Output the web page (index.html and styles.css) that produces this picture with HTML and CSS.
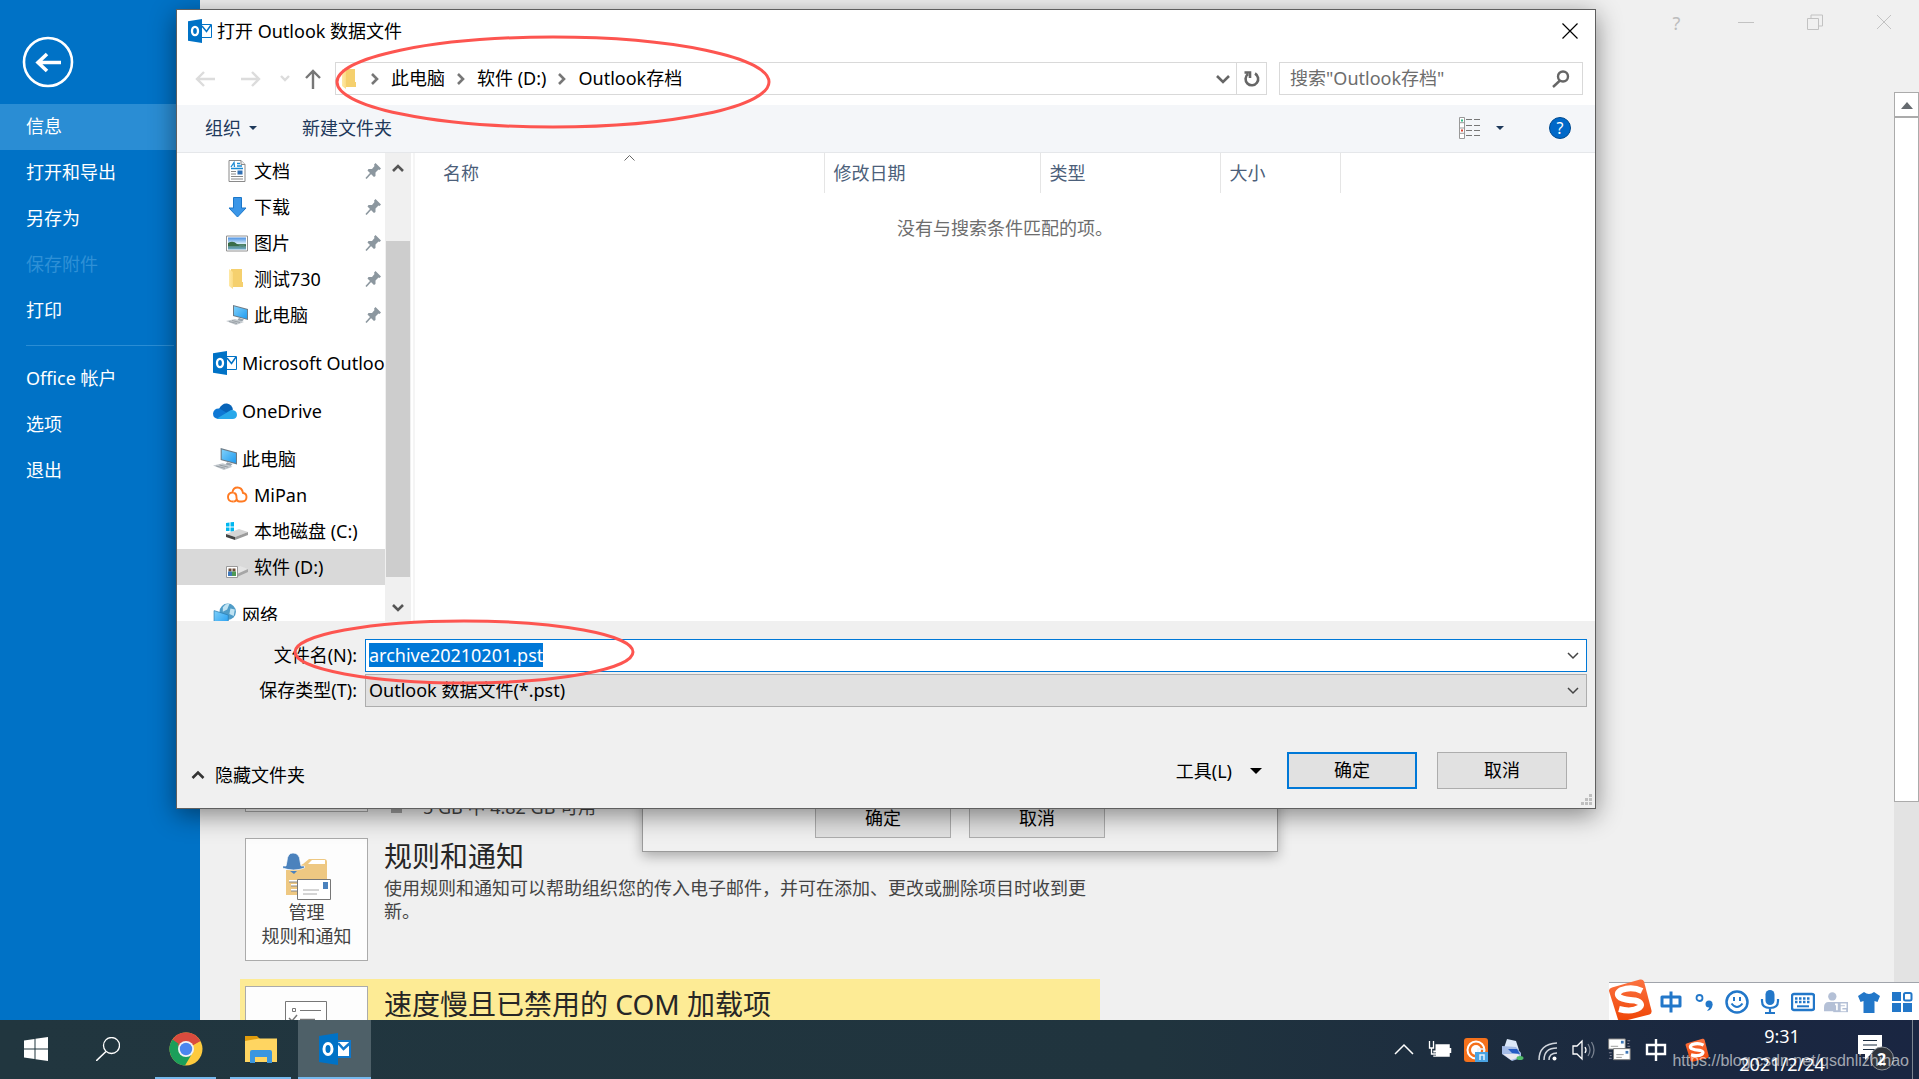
FILE: index.html
```html
<!DOCTYPE html>
<html lang="zh-CN">
<head>
<meta charset="utf-8">
<title>打开 Outlook 数据文件</title>
<link rel="stylesheet" href="styles.css">
</head>
<body>
<svg class="sprite" aria-hidden="true">
  <defs>
    <linearGradient id="g-folder" x1="0" x2="1"><stop offset="0" stop-color="#ffe9a6"/><stop offset="1" stop-color="#fbdc85"/></linearGradient>
    <linearGradient id="g-screen" x1="0" y1="0" x2="1" y2="1"><stop offset="0" stop-color="#7fd0fa"/><stop offset="1" stop-color="#1f9bf0"/></linearGradient>
    <linearGradient id="g-sogou" x1="0" y1="0" x2="0" y2="1"><stop offset="0" stop-color="#fb7240"/><stop offset="1" stop-color="#ef4506"/></linearGradient>
    <linearGradient id="g-sky" x1="0" y1="0" x2="0" y2="1"><stop offset="0" stop-color="#4a90e2"/><stop offset=".5" stop-color="#d5ebfa"/><stop offset=".55" stop-color="#4d7f5c"/><stop offset="1" stop-color="#6ea9cc"/></linearGradient>
  </defs>
  <symbol id="i-outlook" viewBox="0 0 24 24">
    <path d="M13 5.500h10.500v13H13z" fill="#fff" stroke="#0072c6"/><path d="M14 7l4.500 5.500L23 6" fill="none" stroke="#0072c6" stroke-width="1.500"/>
    <path d="M0 2.200L14 0v24L0 21.800z" fill="#0072c6"/><ellipse cx="7" cy="12" rx="3" ry="4.200" fill="none" stroke="#fff" stroke-width="2.300"/>
  </symbol>
  <symbol id="i-doc" viewBox="0 0 22 22">
    <path d="M3 .500h12l4 4v17H3z" fill="#fff" stroke="#8a8a8a"/><path d="M15 .500v4h4" fill="#eee" stroke="#8a8a8a"/>
    <path d="M5 7L8 2.500 8.500 7M11 3.500h3M11 6h5M5 8.500h12" stroke="#1b8ad3" fill="none" stroke-width="1.300"/><path d="M5 11.500h5M5 14h5M5 16.500h12M5 19h12" stroke="#888"/><path d="M11.500 10.500h5v4h-5z" fill="#2f6fb4"/>
  </symbol>
  <symbol id="i-down" viewBox="0 0 22 22"><path d="M7.500 1.500h8V12H20l-8.500 9L3 12h4.500z" fill="#3a96e8" stroke="#1b76c8"/></symbol>
  <symbol id="i-pic" viewBox="0 0 22 22"><path d="M.500 4h21v15H.500z" fill="#fff" stroke="#929292"/><path d="M2 5.500h18v12H2z" fill="url(#g-sky)"/><path d="M2 11q5-3 9 1t9 1v1H2z" fill="#3a6d48"/></symbol>
  <symbol id="i-folder" viewBox="0 0 22 22"><path d="M5 1h11v13h1v5H5z" fill="#f5d06e"/><path d="M3 1l4 3v17l-4-3z" fill="url(#g-folder)"/></symbol>
  <symbol id="i-pc" viewBox="0 0 22 22"><path d="M7 1l15 4v11L7 12z" fill="#6c7a85"/><path d="M8 2.200l13 3.500v9L8 11.200z" fill="url(#g-screen)"/><path d="M13 14l5 1.500-2 2-5-1z" fill="#9aa4ac"/><path d="M0 17l9-2 9 3-8 3z" fill="#c3c9ce"/><path d="M3 17.500l8 2M6 16.500l8 2" stroke="#8f979d" stroke-width=".8"/></symbol>
  <symbol id="i-onedrive" viewBox="0 0 24 24"><path d="M6 10Q9 4 14 4.500q5 1 6 6l-8 6z" fill="#0864b8"/><path d="M5 20Q0 19 0 14.500 1 9 6.500 9.500L14 14l-8 6z" fill="#0f78d4"/><path d="M4 19.500l14-8.500q6 0 6 5-.5 4-4.500 4H6z" fill="#28a8ea"/></symbol>
  <symbol id="i-mipan" viewBox="0 0 22 22"><path d="M7.500 17.500H7q-5 0-5-4.500 0-4 4.500-4.500Q7 3.500 11.500 3.500T17 9q3.500.500 3.500 4 0 4.500-4.500 4.500h-2.500q-3 0-3-4Q10.500 9 7.500 9" fill="none" stroke="#ff7a22" stroke-width="1.900"/><path d="M7.500 17.500q2.500 0 3-2" fill="none" stroke="#ff7a22" stroke-width="1.900"/></symbol>
  <symbol id="i-drivec" viewBox="0 0 22 22"><path d="M0 3l3.500-.500V6.500H0zM4.500 2.300L8 2v4.500H4.500zM0 7.500h3.500v3.500H0zM4.500 7.500H8V11.500H4.500z" fill="#00b7f0"/><path d="M0 14l13-5 9 3-13 5z" fill="#d5d5d5"/><path d="M0 14l9 3v3l-9-3z" fill="#444"/><path d="M9 17l13-5v3L9 20z" fill="#9b9b9b"/></symbol>
  <symbol id="i-drived" viewBox="0 0 22 22"><path d="M8 13l6-3 8 3-11 5z" fill="#e4e4e4"/><path d="M11 18l11-5v3l-11 5z" fill="#a6a6a6"/><path d="M.500 10.500h11v11h-11z" fill="#fff" stroke="#999"/><path d="M2.500 12.500h3v3h-3zM6.500 12.500h3v3h-3z" fill="#6b4a36"/><path d="M2 15.500h4V20H2z" fill="#3f78bb"/><path d="M6 15.500h4V20H6z" fill="#4f9a56"/></symbol>
  <symbol id="i-net" viewBox="0 0 22 22"><circle cx="13.500" cy="8" r="7.500" fill="#4f9cc7"/><path d="M9 4q3-4 6-3l-2 5-4 2zM16 5l4 1-1 6-4-2z" fill="#bfe3f3"/><path d="M1 7l13 4v10L1 18z" fill="url(#g-screen)" stroke="#2a7fb5" stroke-width=".7"/></symbol>
  <symbol id="i-pin" viewBox="0 0 16 16"><path d="M10.500 0L16 5.500 14.500 7 13.500 6.500 10.500 9.500 10.500 13 9 14 2.500 7.500 3.500 6H7L9.500 3 9 1.800z" fill="#8c979f"/><path d="M6 10L1 15.500" stroke="#8c979f" stroke-width="1.600"/></symbol>
  <symbol id="i-sogou" viewBox="0 0 44 44"><path d="M4 9.500L32 1.500q3-.6 4 2l7.500 29q.5 3-2 4L14 43.500q-3 .5-4-2L1 13q-.5-2.500 3-3.500z" fill="url(#g-sogou)"/><path d="M34 13Q24 8 13.500 12 7 15.500 12 19.500 17 22 27 22.500q9 2.500 4.500 7Q24 34.500 11 31" fill="none" stroke="#fff" stroke-width="6"/></symbol>
  <symbol id="i-mail" viewBox="0 0 26 26"><path d="M.700 1h18v11h-18z" fill="#fff" stroke="#777"/><path d="M14 3h3v3h-3z" fill="#3f78b8"/><path d="M3 9h8" stroke="#999"/><path d="M6 11.500h18v12H6z" fill="#fff" stroke="#777"/><path d="M19 14h3v3h-3z" fill="#3f78b8"/><path d="M9 18h8M9 21h6" stroke="#999"/><path d="M21 3h3M21 6h2M21 9h3M1 16h3M2 19h2M1 22h3" stroke="#889"/></symbol>
  <symbol id="i-zhong" viewBox="0 0 24 24"><path d="M3 7h18v9H3zM12 1v22" fill="none" stroke="currentColor" stroke-width="2.400"/></symbol>
</svg>

<main class="workspace">
  <nav class="backstage-nav" aria-label="文件">
    <button class="back" aria-label="返回"><svg viewBox="0 0 52 52"><circle cx="26" cy="26" r="24" fill="none" stroke="#fff" stroke-width="2.600"/><path d="M39 26.500H16M25 18l-9 8.500 9 8.500" fill="none" stroke="#fff" stroke-width="3.600"/></svg></button>
    <a href="#info" class="nav-item active">信息</a>
    <a href="#open" class="nav-item">打开和导出</a>
    <a href="#saveas" class="nav-item">另存为</a>
    <a href="#attach" class="nav-item disabled">保存附件</a>
    <a href="#print" class="nav-item">打印</a>
    <hr class="nav-rule">
    <a href="#account" class="nav-item">Office 帐户</a>
    <a href="#options" class="nav-item">选项</a>
    <a href="#exit" class="nav-item">退出</a>
  </nav>

  <div class="backstage-content">
    <section class="section mailbox">
      <div class="tile"></div>
      <div class="meter"><span class="meter-block"></span><span>5 GB 中 4.82 GB 可用</span></div>
    </section>
    <section class="section">
      <button class="tile">
        <svg class="tile-icon" viewBox="0 0 48 48"><path d="M3 18h5l12-6 6-5h15q3 0 3 3v33H3z" fill="#eec882"/><path d="M25 12l4-4h13v4z" fill="#fff"/><path d="M10 1q6.500 0 7 8l1 5h3.500v2q-11 4-22 0v-2H3l1-5q.500-8 6-8z" fill="#4b82bd" stroke="#fff" stroke-width=".7"/><path d="M7 19h7l-3 3z" fill="#4b82bd"/><path d="M6 28h9v2H6zM8 32h7v2H8zM8 37h7v2H8z" fill="#fff"/><path d="M6 30h8M8 34h6M8 39h6" stroke="#888"/><path d="M14.500 27.500h33v20h-33z" fill="#fff" stroke="#777"/><path d="M40 30h5v7h-5z" fill="#4b82bd"/><path d="M20 38h16M20 42h14" stroke="#aaa"/></svg>
        <span>管理<br>规则和通知</span>
      </button>
      <div class="section-text">
        <h2>规则和通知</h2>
        <p>使用规则和通知可以帮助组织您的传入电子邮件，并可在添加、更改或删除项目时收到更新。</p>
      </div>
    </section>
    <section class="section highlighted">
      <button class="tile" aria-label="管理 COM 加载项">
        <svg class="tile-icon" viewBox="0 0 48 48"><path d="M2.500 1.500h41v42h-41z" fill="#fff" stroke="#777"/><path d="M9.500 8.500h3v3h-3zM17 10.500h21" fill="none" stroke="#777"/><path d="M6 18l3 3 5-6M17 19.500h15" fill="none" stroke="#777" stroke-width="1.500"/></svg>
      </button>
      <div class="section-text"><h2>速度慢且已禁用的 COM 加载项</h2></div>
    </section>
  </div>

  <div class="window-controls">
    <button aria-label="帮助">?</button>
    <button aria-label="最小化"><svg viewBox="0 0 16 16"><path d="M0 8.500h16"/></svg></button>
    <button aria-label="还原"><svg viewBox="0 0 16 16"><path d="M.500 4.500h11v11H.500zM4 4V1h11.500v11H12"/></svg></button>
    <button aria-label="关闭"><svg viewBox="0 0 16 16"><path d="M1 1l14 14M15 1L1 15"/></svg></button>
  </div>

  <div class="page-scroll">
    <button class="scroll-up" aria-label="向上滚动"><svg viewBox="0 0 12 8"><path d="M0 8L6 1l6 7z" fill="#666b70"/></svg></button>
    <div class="scroll-thumb"></div>
  </div>

  <div class="settings-dialog">
    <button class="push">确定</button>
    <button class="push">取消</button>
  </div>

  <form class="file-dialog" role="dialog" aria-labelledby="dlg-title">
    <header class="titlebar">
      <svg class="ico24"><use href="#i-outlook"/></svg>
      <h1 id="dlg-title">打开 Outlook 数据文件</h1>
      <button type="button" class="close" aria-label="关闭"><svg viewBox="0 0 16 16"><path d="M.500.500l15 15M15.500.500l-15 15" stroke="#000" stroke-width="1.200"/></svg></button>
    </header>

    <div class="address-row">
      <div class="history">
        <button type="button" aria-label="后退"><svg viewBox="0 0 20 20"><path d="M20 10H2M9 3l-7 7 7 7" stroke="#dcdcdc"/></svg></button>
        <button type="button" class="forward" aria-label="前进"><svg viewBox="0 0 20 20"><path d="M0 10h18M11 3l7 7-7 7" stroke="#dcdcdc"/></svg></button>
        <button type="button" class="recent" aria-label="最近位置"><svg viewBox="0 0 10 20"><path d="M1 7l4 4 4-4" stroke="#dcdcdc"/></svg></button>
        <button type="button" class="up" aria-label="上一级"><svg viewBox="0 0 20 20"><path d="M10 20V2M3 9l7-7 7 7" stroke="#777"/></svg></button>
      </div>
      <div class="address">
        <svg class="ico22"><use href="#i-folder"/></svg>
        <svg class="crumb-sep" viewBox="0 0 8 12"><path d="M1 1l5 5-5 5"/></svg>
        <a href="#pc">此电脑</a>
        <svg class="crumb-sep" viewBox="0 0 8 12"><path d="M1 1l5 5-5 5"/></svg>
        <a href="#d">软件 (D:)</a>
        <svg class="crumb-sep" viewBox="0 0 8 12"><path d="M1 1l5 5-5 5"/></svg>
        <a href="#archive">Outlook存档</a>
        <button type="button" class="addr-drop" aria-label="历史记录"><svg viewBox="0 0 14 10"><path d="M1 2l6 6 6-6"/></svg></button>
        <button type="button" class="refresh" aria-label="刷新"><svg viewBox="0 0 18 18"><path d="M12 3.500a6.300 6.300 0 1 1-7 .5M1.500 2.500H7V8" fill="none" stroke="#666" stroke-width="2.600"/></svg></button>
      </div>
      <div class="search">
        <input type="search" aria-label="搜索" placeholder='搜索"Outlook存档"'>
        <svg viewBox="0 0 18 18"><circle cx="11" cy="6.500" r="5" /><path d="M8 10.500L1 17"/></svg>
      </div>
    </div>

    <div class="toolbar">
      <button type="button">组织<svg class="tri" viewBox="0 0 8 4"><path d="M0 0h8L4 4z"/></svg></button>
      <button type="button">新建文件夹</button>
      <button type="button" class="view" aria-label="更改视图"><svg class="ico22" viewBox="0 0 22 22"><path d="M.500.500h5v21h-5zM.500 5.700h5M.500 11h5M.500 16.300h5" fill="#fff" stroke="#999"/><path d="M7 2.500h6M15 2.500h6M7 8.500h6M15 8.500h6M7 13.500h6M15 13.500h6M7 18.500h6M15 18.500h6" stroke="#777"/><path d="M2 2.500h2v2H2z" fill="#3b8"/><path d="M2 12.500h2v2H2z" fill="#d43"/></svg><svg class="tri" viewBox="0 0 8 4"><path d="M0 0h8L4 4z"/></svg></button>
      <button type="button" class="help" aria-label="帮助">?</button>
    </div>

    <div class="panes">
      <ul class="tree">
        <li class="sub"><svg class="ico22"><use href="#i-doc"/></svg><span>文档</span><svg class="pin"><use href="#i-pin"/></svg></li>
        <li class="sub"><svg class="ico22"><use href="#i-down"/></svg><span>下载</span><svg class="pin"><use href="#i-pin"/></svg></li>
        <li class="sub"><svg class="ico22"><use href="#i-pic"/></svg><span>图片</span><svg class="pin"><use href="#i-pin"/></svg></li>
        <li class="sub"><svg class="ico22"><use href="#i-folder"/></svg><span>测试730</span><svg class="pin"><use href="#i-pin"/></svg></li>
        <li class="sub"><svg class="ico22"><use href="#i-pc"/></svg><span>此电脑</span><svg class="pin"><use href="#i-pin"/></svg></li>
        <li class="root"><svg class="ico24"><use href="#i-outlook"/></svg><span>Microsoft Outlook</span></li>
        <li class="root"><svg class="ico24"><use href="#i-onedrive"/></svg><span>OneDrive</span></li>
        <li class="root"><svg class="ico24"><use href="#i-pc"/></svg><span>此电脑</span></li>
        <li class="sub"><svg class="ico22"><use href="#i-mipan"/></svg><span>MiPan</span></li>
        <li class="sub"><svg class="ico22"><use href="#i-drivec"/></svg><span>本地磁盘 (C:)</span></li>
        <li class="sub selected"><svg class="ico22"><use href="#i-drived"/></svg><span>软件 (D:)</span></li>
        <li class="root"><svg class="ico24"><use href="#i-net"/></svg><span>网络</span></li>
      </ul>
      <div class="tree-scroll">
        <svg viewBox="0 0 12 10"><path d="M1 8l5-5 5 5"/></svg>
        <div class="tree-thumb"></div>
        <svg viewBox="0 0 12 10"><path d="M1 2l5 5 5-5"/></svg>
      </div>
      <div class="files">
        <table>
          <thead><tr><th class="c-name">名称<svg class="sort" viewBox="0 0 11 6"><path d="M.500 5.500l5-5 5 5" fill="none" stroke="#666"/></svg></th><th class="c-date">修改日期</th><th class="c-type">类型</th><th class="c-size">大小</th><th class="c-rest"></th></tr></thead>
          <tbody><tr><td colspan="5">没有与搜索条件匹配的项。</td></tr></tbody>
        </table>
      </div>
    </div>

    <div class="fields">
      <label for="fname">文件名(N):</label>
      <div class="combo active"><input id="fname" type="text" value="archive20210201.pst"><svg viewBox="0 0 12 8"><path d="M1 1l5 5 5-5"/></svg></div>
      <label for="ftype">保存类型(T):</label>
      <div class="combo"><select id="ftype"><option>Outlook 数据文件(*.pst)</option></select><svg viewBox="0 0 12 8"><path d="M1 1l5 5 5-5"/></svg></div>
    </div>

    <footer class="actions">
      <button type="button" class="hide-folders"><svg viewBox="0 0 14 10"><path d="M1.500 8L7 2.500 12.500 8"/></svg>隐藏文件夹</button>
      <button type="button" class="tools">工具(L)<svg viewBox="0 0 12 6"><path d="M0 0h12L6 6z"/></svg></button>
      <button type="button" class="push primary">确定</button>
      <button type="button" class="push">取消</button>
    </footer>
    <svg class="grip" viewBox="0 0 12 12"><path d="M8 0h3v3H8zM4 4h3v3H4zM8 4h3v3H8zM0 8h3v3H0zM4 8h3v3H4zM8 8h3v3H8z" fill="#bfbfbf"/></svg>

    <svg class="mark mark-path" viewBox="0 0 436 94"><ellipse cx="218" cy="47" rx="216" ry="45"/></svg>
    <svg class="mark mark-name" viewBox="0 0 342 66"><ellipse cx="171" cy="33" rx="169" ry="31"/></svg>
  </form>

  <div class="ime">
    <svg class="ime-logo"><use href="#i-sogou"/></svg>
    <svg viewBox="0 0 24 24"><path d="M3 7h18v9H3zM12 1.500v21" fill="none" stroke="#2277c9" stroke-width="3" stroke-linejoin="round"/></svg>
    <svg viewBox="0 0 24 24"><circle cx="7.500" cy="8" r="3" fill="none" stroke="#2277c9" stroke-width="1.800"/><circle cx="17" cy="14" r="3.500" fill="#2277c9"/><path d="M20.500 14q0 6-5.500 7 3-3 2.500-6" fill="#2277c9"/></svg>
    <svg viewBox="0 0 24 24"><circle cx="12" cy="12" r="10.500" fill="none" stroke="#2277c9" stroke-width="2.500"/><path d="M9 7v4M15 7v4M6.500 13.500q5.500 7 11 0" fill="none" stroke="#2277c9" stroke-width="2"/></svg>
    <svg viewBox="0 0 24 24"><rect x="7.500" y="0" width="9" height="15" rx="4.500" fill="#2277c9"/><path d="M4 9v2q0 7 8 7t8-7V9M12 18v5M7 23h10" fill="none" stroke="#2277c9" stroke-width="2.200"/></svg>
    <svg viewBox="0 0 24 24"><rect x="1" y="4" width="22" height="16" rx="2" fill="none" stroke="#2277c9" stroke-width="2.400"/><path d="M4 8.500h16M4 12h16" stroke="#2277c9" stroke-width="2.300" stroke-dasharray="2.500 1.500"/><path d="M6 16.300h12" stroke="#2277c9" stroke-width="2"/></svg>
    <svg viewBox="0 0 26 24"><circle cx="9" cy="6" r="4.500" fill="#b4c0d6"/><path d="M0 22v-4q0-6 5-6h9q4 0 4 4v6z" fill="#b4c0d6"/><path d="M10 12h16v11H10z" fill="#b4c0d6"/><path d="M12 14.500h2V21M18 14.500h5.500v3H19V21h5" fill="none" stroke="#fff" stroke-width="1.800"/></svg>
    <svg viewBox="0 0 24 24"><path d="M7 2q5 4 10 0l6 4-2.500 6-3-1v12h-11V11l-3 1L1 6z" fill="#2277c9"/></svg>
    <svg viewBox="0 0 24 24"><path d="M2 2h9v9H2zM2 13h9v9H2zM13 13h9v9h-9z" fill="#2277c9"/><rect x="14" y="3" width="7.500" height="7.500" rx="1.500" fill="none" stroke="#2277c9" stroke-width="2"/></svg>
  </div>
</main>

<footer class="taskbar">
  <button class="task" aria-label="开始"><svg viewBox="0 0 24 24"><path d="M0 3.500L10.500 2v9.500H0zM11.500 1.800L24 0v11.500H11.500zM0 12.500h10.500V22L0 20.500zM11.500 12.500H24V24l-12.500-1.800z" fill="#fff"/></svg></button>
  <button class="task" aria-label="搜索"><svg viewBox="0 0 24 24"><circle cx="15.500" cy="8.500" r="8" fill="none" stroke="#fff" stroke-width="1.300"/><path d="M10 14.500L0 24" stroke="#fff" stroke-width="1.600"/></svg></button>
  <button class="task app running" aria-label="Chrome"><svg viewBox="0 0 34 34"><circle cx="17" cy="17" r="16.500" fill="#fdca3e"/><path d="M17 17L2.700 8.700A16.500 16.500 0 0 1 31.300 8.700z" fill="#d94b3e"/><path d="M3.500 7.600A16.500 16.500 0 0 0 16 33.500L24 20 17 17z" fill="#1b9f5a"/><path d="M17 9h14.500L17 17 8 13z" fill="#d94b3e"/><circle cx="17" cy="17" r="8" fill="#f2f2f2"/><circle cx="17" cy="17" r="6.200" fill="#4a86ee"/></svg></button>
  <button class="task app running multi" aria-label="文件资源管理器"><svg viewBox="0 0 34 34"><path d="M1 4h12l3 3-2 4H1z" fill="#e09c0c"/><path d="M1 9l14-2.500h18V30H1z" fill="#ffd561"/><path d="M6 31V20q0-2 2-2h18q2 0 2 2v11h-5v-6H11v6z" fill="#3a96e0"/></svg></button>
  <button class="task app current" aria-label="Outlook"><svg viewBox="0 0 34 34"><path d="M18 9h14v16H18z" fill="#fff" stroke="#0f78cc" stroke-width="2"/><path d="M20 11l5.500 6L32 11" fill="none" stroke="#0f78cc" stroke-width="2.500"/><path d="M1 4l19-3v32L1 30z" fill="#0072c6"/><ellipse cx="10" cy="17" rx="4" ry="5.500" fill="none" stroke="#fff" stroke-width="3"/></svg></button>

  <div class="tray">
    <svg viewBox="0 0 24 24"><path d="M3 16l9-9 9 9" fill="none" stroke="#fff" stroke-width="1.500"/></svg>
    <svg viewBox="0 0 24 24"><path d="M6 7h15v11H6zM22.500 10v5" fill="#fff" stroke="#fff" stroke-width="1.500"/><path d="M1 4v7h5V4M3.500 11v5H8" fill="none" stroke="#1e2f3f" stroke-width="3"/><path d="M1.500 3v7h4V3M3.500 10v6H8" fill="none" stroke="#fff" stroke-width="1.300"/></svg>
    <svg viewBox="0 0 24 24"><rect width="24" height="24" rx="3" fill="#f4711c"/><circle cx="12" cy="12" r="8.500" fill="none" stroke="#fff" stroke-width="2"/><circle cx="12" cy="12" r="5" fill="#fff"/><path d="M11 14h13v10H11z" fill="#4aa3e2"/><path d="M14 14v-3h6v3M16 22v-5h4v5" fill="none" stroke="#e8f4fc" stroke-width="1.500"/></svg>
    <svg viewBox="0 0 24 24"><path d="M4 10L7 1l9 2 3 9z" fill="#dce8f8"/><path d="M2 8l14 1 5 6v5l-9 3L2 16z" fill="#a5bce6"/><path d="M8 11h9l3 5-8-1z" fill="#245bc4"/><path d="M3 16l8 6 9-3-2-3z" fill="#e8e8f0"/><ellipse cx="20" cy="20" rx="3.500" ry="2" fill="#50bc69"/></svg>
    <svg viewBox="0 0 24 24"><path d="M3 22Q3 6 21 5M8 22q0-12 13-12M13 22q0-7 8-7" fill="none" stroke="#d0d5dc" stroke-width="1.500"/><circle cx="18.500" cy="20.500" r="2" fill="#fff"/></svg>
    <svg viewBox="0 0 24 24"><path d="M1 8h4l5-5v18l-5-5H1z" fill="none" stroke="#fff" stroke-width="1.300"/><path d="M13 9q2 3 0 6" fill="none" stroke="#fff" stroke-width="1.300"/><path d="M16 6q4 6 0 12M19.500 4q5 8 0 16" fill="none" stroke="#77808f" stroke-width="1.300"/></svg>
    <svg viewBox="0 0 26 26"><use href="#i-mail"/></svg>
    <svg class="white"><use href="#i-zhong"/></svg>
    <svg class="tray-sogou"><use href="#i-sogou"/></svg>
  </div>
  <time class="clock" datetime="2021-02-24T09:31"><span>9:31</span><span>2021/2/24</span></time>
  <button class="notices" aria-label="通知"><svg viewBox="0 0 36 36"><path d="M0 0h24v19H13l-6 6v-6H0z" fill="#fff"/><path d="M5 5.500h14M5 10h14M5 14.500h14" stroke="#1b2c40" stroke-width="1.200"/><circle cx="24" cy="23.500" r="11.500" fill="#30353c" stroke="#8d9298"/></svg><span>2</span></button>
  <span class="show-desktop"></span>
  <span class="watermark">https://blog.csdn.net/qsdnlizhihao</span>
</footer>
<script src="app.js"></script>
</body>
</html>
```
FILE: styles.css
```css
* { box-sizing: border-box; }

body {
  margin: 0;
  height: 100vh;
  display: flex;
  flex-direction: column;
  overflow: hidden;
  background: #f0f0f0;
  color: #000;
  font: 18px/24px "Noto Sans", "Noto Sans CJK SC", sans-serif;
}

h1, h2, p, ul { margin: 0; padding: 0; font-weight: 400; }
a { color: inherit; text-decoration: none; }
svg { display: block; flex: none; }
button, input, select { font: inherit; color: inherit; }
button { padding: 0; border: 0; background: none; }

.sprite { position: absolute; width: 0; height: 0; }
.ico22 { width: 22px; height: 22px; }
.ico24 { width: 24px; height: 24px; }

.workspace {
  position: relative;
  flex: 1;
  min-height: 0;
  display: flex;
  overflow: hidden;
}

/* Backstage navigation */
.backstage-nav {
  width: 200px;
  flex: none;
  display: flex;
  flex-direction: column;
  background: #0072c6;
  color: #fff;
}
.back { width: 52px; height: 52px; margin: 36px 0 16px 22px; }
.nav-item { padding: 10px 26px 12px; }
.nav-item.active { background: #2a8dd4; }
.nav-item.disabled { color: #2e90d6; }
.nav-rule { width: 148px; margin: 11px 0 10px 26px; border: 0; border-top: 1px solid #2a8dd4; }

/* Backstage content */
.backstage-content {
  flex: 1;
  padding: 689px 0 0 40px;
  display: flex;
  flex-direction: column;
  color: #444;
}
.section {
  width: 860px;
  display: flex;
  gap: 16px;
  padding: 0 5px;
  margin-bottom: 26px;
}
.section.highlighted { margin-top: -8px; padding-top: 7px; background: #fdeb95; }
.tile {
  width: 123px;
  height: 123px;
  flex: none;
  display: flex;
  flex-direction: column;
  align-items: center;
  padding-top: 13px;
  border: 1px solid #ababab;
  background: #fdfdfd;
  line-height: 24px;
}
.tile-icon { width: 48px; height: 48px; }
.meter { display: flex; align-self: flex-end; gap: 21px; align-items: center; padding-left: 7px; margin-bottom: -7px; }
.meter-block { width: 11px; height: 12px; background: #a0a0a0; }
.section h2 { color: #262626; font-size: 28px; line-height: 36px; }
.section p { width: 712px; padding-top: 3px; line-height: 23px; }

.window-controls {
  position: absolute;
  top: 11px;
  right: 25px;
  display: flex;
  gap: 48px;
  color: #bdbdbd;
}
.window-controls button { width: 21px; height: 22px; }
.window-controls svg { width: 16px; height: 16px; margin: auto; fill: none; stroke: #c2c2c2; }

.page-scroll { width: 25px; margin-top: 92px; display: flex; flex-direction: column; background: #e3e3e3; }
.scroll-up { height: 25px; display: grid; place-items: center; border: 1px solid #ababab; background: #fff; }
.scroll-up svg { width: 12px; height: 8px; }
.scroll-thumb { flex: 0 0 685px; border: 1px solid #ababab; background: #fff; }

/* Dialog that stays open underneath */
.settings-dialog {
  position: absolute;
  left: 642px;
  right: 641px;
  bottom: 168px;
  height: 120px;
  display: flex;
  justify-content: flex-end;
  align-items: flex-end;
  gap: 18px;
  padding: 0 172px 13px;
  border: 1px solid #9a9a9a;
  background: #f0f0f0;
  box-shadow: 0 4px 12px rgba(0, 0, 0, .3);
}
.push { width: 130px; height: 37px; padding-bottom: 2px; border: 1px solid #adadad; background: #e1e1e1; }
.settings-dialog .push { width: 137px; padding-bottom: 4px; }
.push.primary { border: 2px solid #0078d7; }

/* Open file dialog */
.file-dialog {
  position: absolute;
  top: 9px;
  left: 176px;
  right: 323px;
  bottom: 211px;
  display: flex;
  flex-direction: column;
  border: 1px solid #5f5f5f;
  background: #f0f0f0;
  box-shadow: 0 6px 24px rgba(0, 0, 0, .45);
}
.titlebar { display: flex; align-items: center; gap: 5px; height: 44px; padding: 0 17px 2px 11px; background: #fff; }
.titlebar h1 { flex: 1; font-size: 18px; line-height: 24px; }
.close svg { width: 16px; height: 16px; }

.address-row { display: flex; gap: 12px; padding: 8px 12px 10px 18px; background: #fff; }
.history { width: 128px; display: flex; align-items: center; }
.history svg { width: 20px; height: 20px; fill: none; stroke-width: 2.400; }
.history button { width: 46px; }
.history .forward { width: 39px; }
.history .recent { width: 23px; }
.history .recent svg { width: 10px; }
.history .up { width: 20px; }
.address { flex: 1; display: flex; align-items: center; height: 33px; padding-left: 3px; border: 1px solid #d9d9d9; }
.address a { padding-bottom: 2px; }
.crumb-sep { width: 8px; height: 12px; margin: 0 12px; fill: none; stroke: #777; stroke-width: 2.600; }
.address .ico22 + .crumb-sep { margin-left: 10px; }
.addr-drop { margin-left: auto; width: 26px; }
.addr-drop svg { width: 14px; height: 10px; margin: auto; fill: none; stroke: #666; stroke-width: 2.600; }
.refresh { width: 30px; height: 31px; border-left: 1px solid #d9d9d9; }
.refresh svg { width: 18px; height: 18px; margin: auto; }
.search { width: 304px; display: flex; align-items: center; padding: 0 12px 0 10px; border: 1px solid #d9d9d9; }
.search input { flex: 1; min-width: 0; padding: 0 0 2px; border: 0; outline: 0; background: none; }
.search input::placeholder { color: #6d6d6d; }
.search svg { width: 18px; height: 18px; fill: none; stroke: #666; stroke-width: 2.400; }

.toolbar { display: flex; align-items: center; gap: 45px; height: 48px; padding: 0 24px 2px 28px; border-bottom: 1px solid #e5e7ea; background: #f4f6f9; color: #1e395b; }
.toolbar button { display: flex; align-items: center; gap: 8px; }
.tri { width: 8px; height: 4px; fill: #1e395b; }
.toolbar .view { margin-left: auto; gap: 15px; }
.toolbar .help { width: 22px; height: 22px; justify-content: center; border: 1px solid #004a8f; border-radius: 50%; background: #0068c8; color: #fff; font-size: 16px; }

.panes { flex: 1; min-height: 0; display: flex; overflow: hidden; background: #fff; }
.tree { width: 208px; list-style: none; overflow: hidden; }
.tree li { display: flex; align-items: center; height: 36px; white-space: nowrap; }
.tree .sub { gap: 6px; padding: 0 4px 0 49px; }
.tree .root { gap: 5px; margin-top: 12px; padding-left: 36px; }
.tree .selected { background: #d9d9d9; }
.pin { width: 16px; height: 16px; margin-left: auto; }
.tree-scroll { width: 26px; padding: 10px 0 8px; display: flex; flex-direction: column; align-items: center; background: #f0f0f0; }
.tree-scroll svg { width: 12px; height: 10px; fill: none; stroke: #555; stroke-width: 2.600; }
.tree-thumb { flex: 0 1 336px; width: 24px; margin: 68px 0 auto; background: #cdcdcd; }
.files { flex: 1; margin-left: 2px; border-left: 2px solid #f5f5f5; }
.files table { width: 100%; border-collapse: collapse; table-layout: fixed; }
.files th { position: relative; height: 40px; padding: 0 9px; border-right: 1px solid #e5e5e5; color: #4c607a; font-weight: 400; text-align: left; }
.files .c-name { width: 409px; padding-left: 28px; }
.files .c-date { width: 216px; }
.files .c-type { width: 180px; }
.files .c-size { width: 120px; }
.files .c-rest { border: 0; }
.sort { position: absolute; top: 2px; left: 209px; width: 11px; height: 6px; }
.files td { padding: 23px 0; color: #6d6d6d; text-align: center; }

.fields { display: grid; grid-template-columns: 180px 1fr; column-gap: 8px; row-gap: 2px; padding: 18px 8px 0 0; text-align: right; align-items: center; }
.fields label { padding-bottom: 2px; }
.combo { position: relative; height: 33px; border: 1px solid #adadad; background: #e1e1e1; }
.combo.active { border-color: #0078d7; background: #fff; }
.combo input, .combo select { display: block; width: 100%; height: 100%; padding: 0 3px 2px; border: 0; outline: 0; appearance: none; background: none; }
.combo input::selection { background: #0078d7; color: #fff; }
.combo svg { position: absolute; top: 12px; right: 7px; width: 12px; height: 8px; fill: none; stroke: #444; stroke-width: 1.500; pointer-events: none; }

.actions { display: flex; align-items: center; padding: 45px 28px 19px 14px; }
.actions button { display: flex; align-items: center; justify-content: center; }
.hide-folders { gap: 10px; margin: 8px auto 0 0; }
.hide-folders svg { width: 14px; height: 10px; fill: none; stroke: #333; stroke-width: 2.600; }
.tools { gap: 18px; margin-right: 25px; }
.tools svg { width: 12px; height: 6px; }
.actions .push + .push { margin-left: 20px; }
.grip { position: absolute; right: 2px; bottom: 2px; width: 12px; height: 12px; }

/* Hand-drawn highlights */
.mark { position: absolute; fill: none; stroke: #fd5550; stroke-width: 3; pointer-events: none; }
.mark-path { left: 158px; top: 25px; width: 436px; height: 94px; }
.mark-name { left: 116px; top: 609px; width: 342px; height: 66px; }

/* Input method bar */
.ime { position: absolute; right: 0; bottom: 0; height: 38px; display: flex; align-items: center; gap: 9px; padding-right: 5px; border-top: 1px solid #a0a4ab; background: #fff; }
.ime svg { width: 24px; height: 24px; }
.ime .ime-logo { width: 44px; height: 44px; margin: -4px -2px 0 -1px; }

/* Taskbar */
.taskbar { position: relative; height: 59px; flex: none; display: flex; align-items: center; background: linear-gradient(90deg, #21363f 0%, #20343e 60%, #1a2740 90%, #1a2642 100%); color: #fff; }
.task { width: 72px; height: 59px; border-bottom: 2px solid transparent; }
.task svg { width: 24px; height: 24px; margin: auto; }
.task.app { width: 61px; margin: 0 7px; }
.task.app svg { width: 34px; height: 34px; }
.task:nth-child(3) { margin-left: 11px; }
.task.running { border-bottom-color: #76b9ed; }
.task.app.current { width: 73px; margin: 0; border-bottom-color: #76b9ed; background: #4e6068; }
.tray { margin-left: auto; display: flex; align-items: center; gap: 12px; }
.tray svg { width: 24px; height: 24px; }
.tray .tray-sogou { margin-left: 5px; }
.white { color: #fff; }
.clock { width: 120px; margin: 0 16px 0 13px; display: flex; flex-direction: column; gap: 4px; text-align: center; }
.notices { position: relative; width: 36px; height: 36px; margin: 6px 18px 0 0; }
.notices span { position: absolute; left: 19px; top: 12px; font-size: 16px; font-weight: 700; }
.show-desktop { width: 7px; align-self: stretch; border-left: 1px solid #7c8490; }
.watermark { position: absolute; right: 10px; bottom: 6px; color: rgba(255, 255, 255, .6); font-family: "Liberation Sans", Arial, sans-serif; font-size: 16px; }
```
FILE: app.js
```js
const fileName = document.getElementById("fname");
fileName.focus({ preventScroll: true });
fileName.select();
```
